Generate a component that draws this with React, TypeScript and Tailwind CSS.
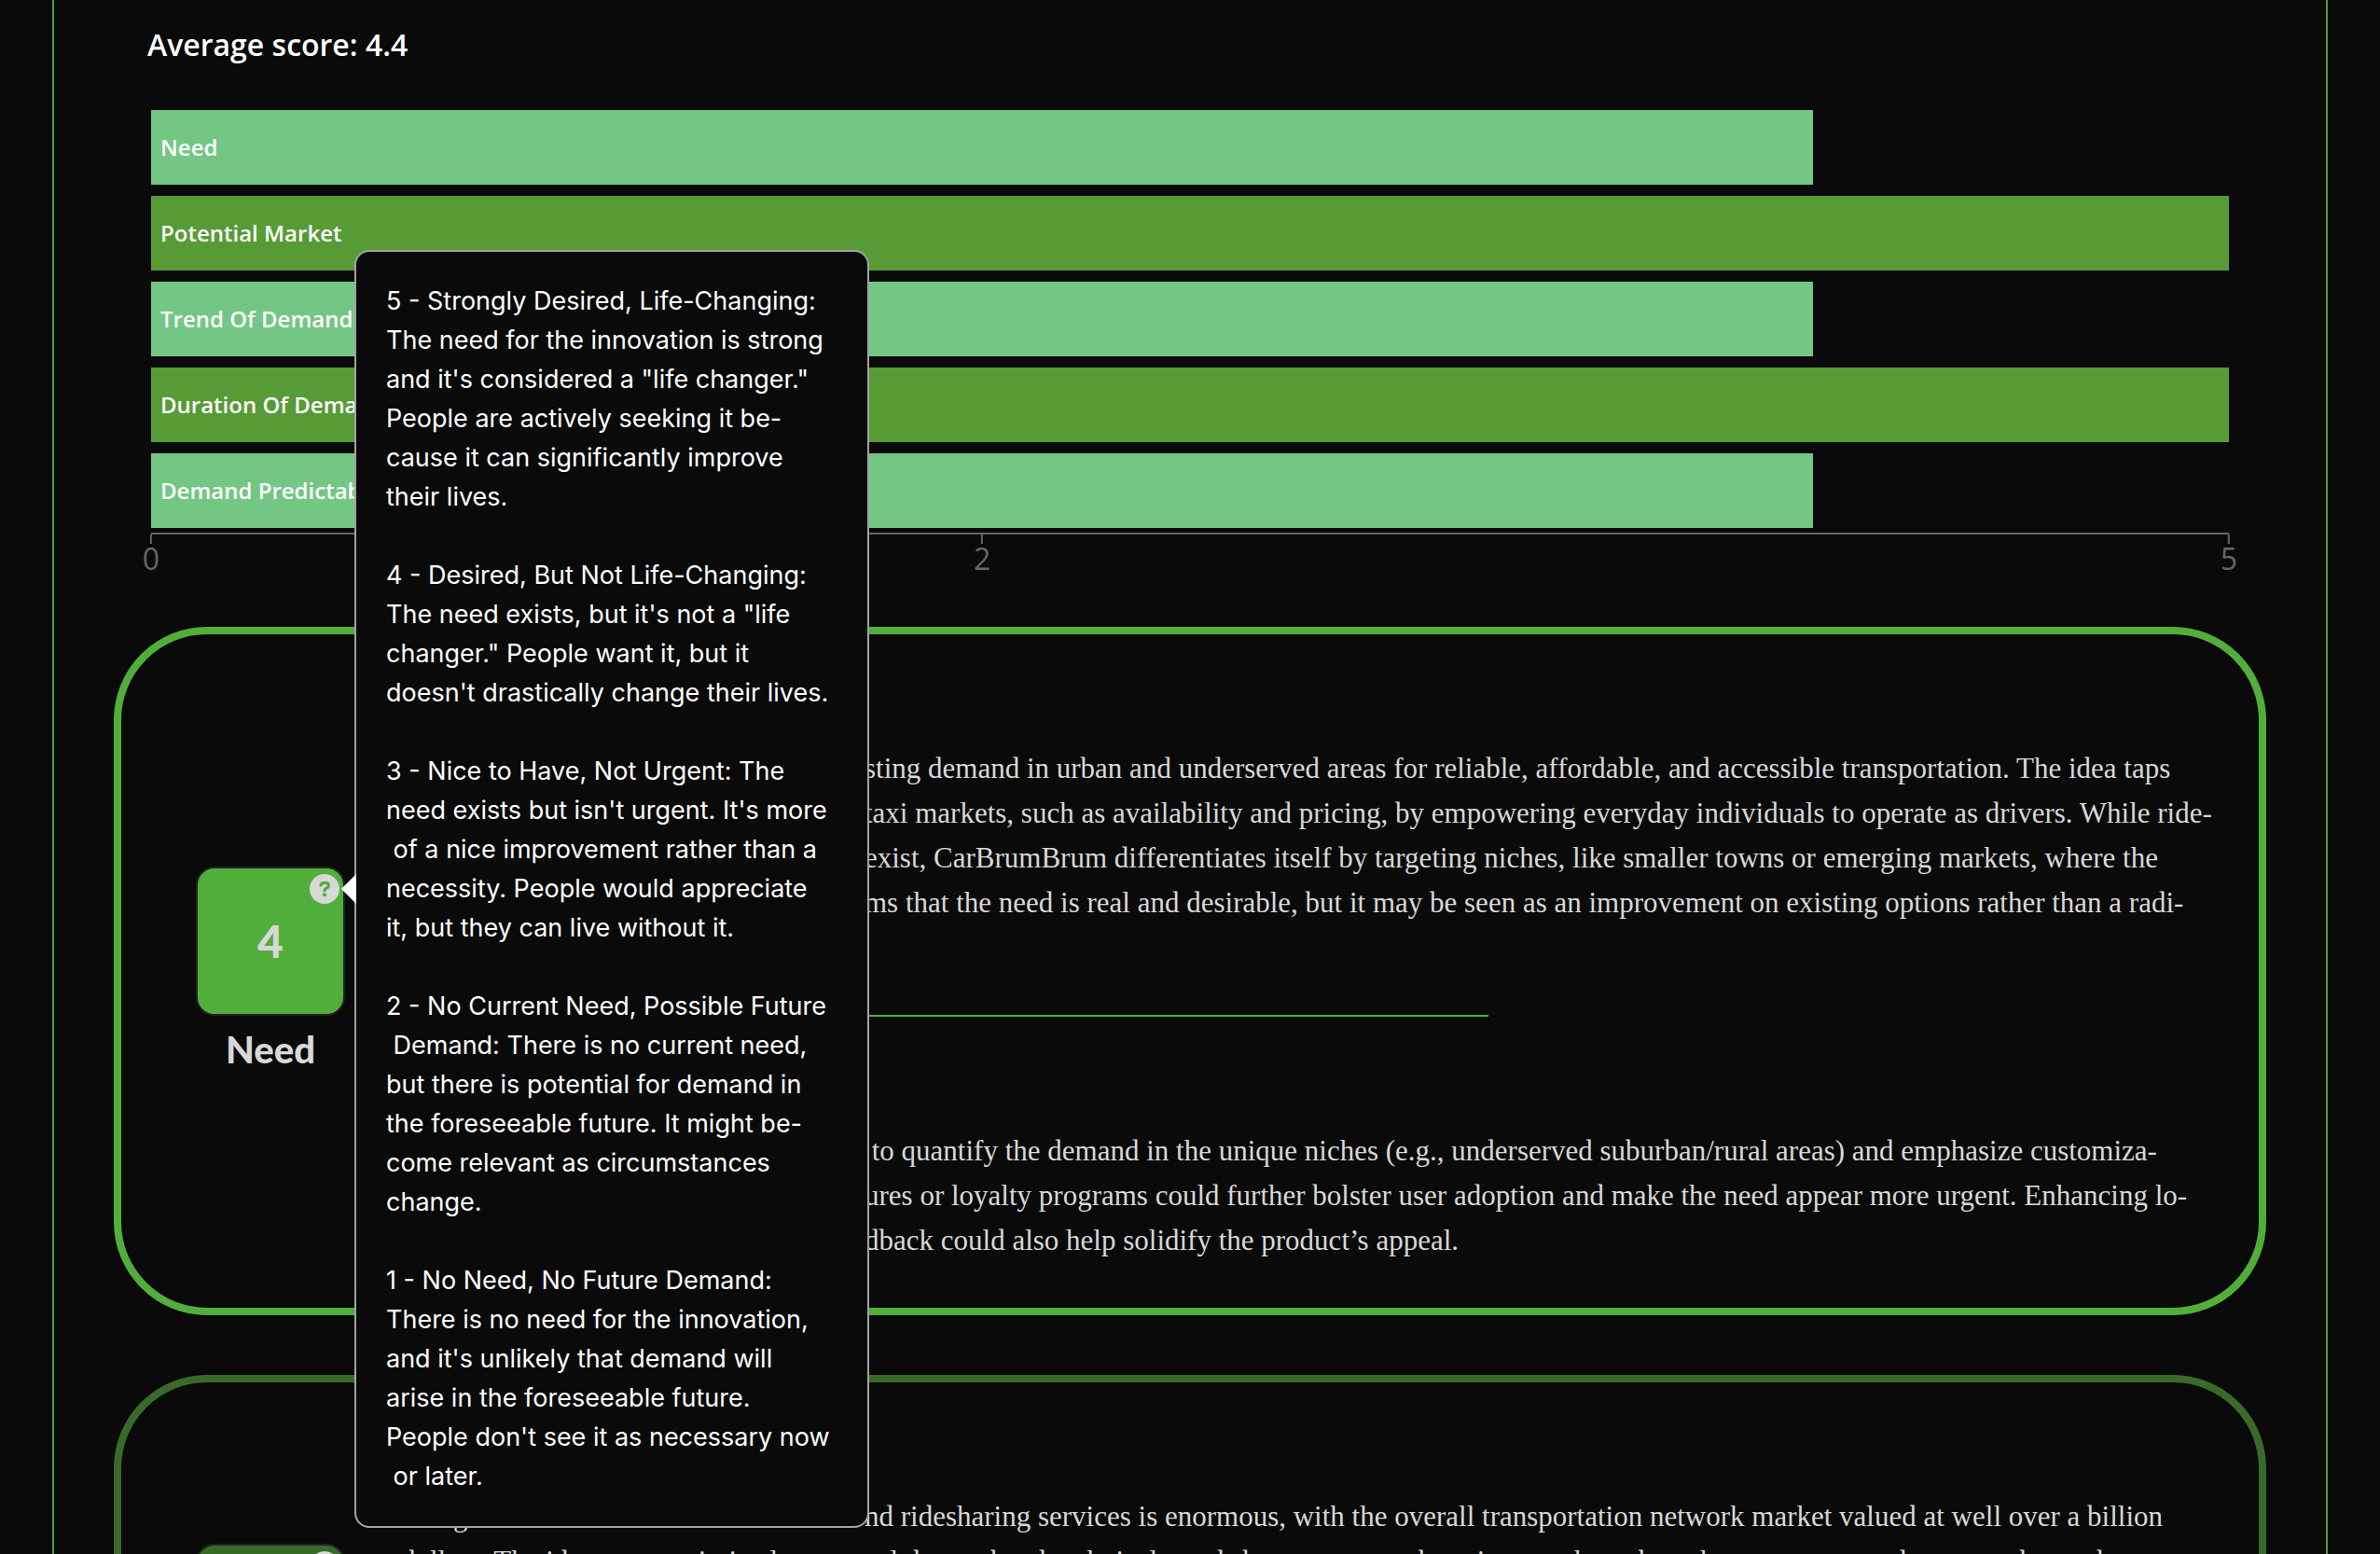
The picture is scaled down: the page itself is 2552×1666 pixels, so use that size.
import React from "react";

const SCORES = [
  { label: "Need", score: 4 },
  { label: "Potential Market", score: 5 },
  { label: "Trend Of Demand", score: 4 },
  { label: "Duration Of Demand", score: 5 },
  { label: "Demand Predictability", score: 4 },
];

const TICKS = [0, 2, 5];
const MAX_SCORE = 5;

const NEED_LEVELS = [
  [
    "5 - Strongly Desired, Life-Changing:",
    "The need for the innovation is strong",
    "and it's considered a \"life changer.\"",
    "People are actively seeking it be-",
    "cause it can significantly improve",
    "their lives.",
  ],
  [
    "4 - Desired, But Not Life-Changing:",
    "The need exists, but it's not a \"life",
    "changer.\" People want it, but it",
    "doesn't drastically change their lives.",
  ],
  [
    "3 - Nice to Have, Not Urgent: The",
    "need exists but isn't urgent. It's more",
    " of a nice improvement rather than a",
    "necessity. People would appreciate",
    "it, but they can live without it.",
  ],
  [
    "2 - No Current Need, Possible Future",
    " Demand: There is no current need,",
    "but there is potential for demand in",
    "the foreseeable future. It might be-",
    "come relevant as circumstances",
    "change.",
  ],
  [
    "1 - No Need, No Future Demand:",
    "There is no need for the innovation,",
    "and it's unlikely that demand will",
    "arise in the foreseeable future.",
    "People don't see it as necessary now",
    " or later.",
  ],
];

type Line = [lead: string, rest: string];

const NEED_REASON: Line[] = [
  ["CarBrumBrum addresses an exi", "sting demand in urban and underserved areas for reliable, affordable, and accessible transportation. The idea taps"],
  ["into gaps in traditional ", "taxi markets, such as availability and pricing, by empowering everyday individuals to operate as drivers. While ride-"],
  ["sharing platforms already ", "exist, CarBrumBrum differentiates itself by targeting niches, like smaller towns or emerging markets, where the"],
  ["need is unmet. This confir", "ms that the need is real and desirable, but it may be seen as an improvement on existing options rather than a radi-"],
  ["cal, life-changing solution.", ""],
];

const NEED_ADVICE: Line[] = [
  ["Conduct market research", " to quantify the demand in the unique niches (e.g., underserved suburban/rural areas) and emphasize customiza-"],
  ["tion. Adding safety feat", "ures or loyalty programs could further bolster user adoption and make the need appear more urgent. Enhancing lo-"],
  ["cal outreach and user fee", "dback could also help solidify the product’s appeal."],
];

const MARKET_REASON: Line[] = [
  ["The global market for taxis a", "nd ridesharing services is enormous, with the overall transportation network market valued at well over a billion"],
  ["dollars. The idea can maximize lo", "cal demand and technical trends by a consumer base in growth, and reach more towns and users as demand"],
  ["rises year over year.", ""],
];

const MARKET_ADVICE: Line[] = [
  ["Prioritize the regions with", " the highest growth and the fewest competing services."],
  ["Then expand in stages.", ""],
  ["Track adoption closely.", ""],
];

function ScoreChart() {
  return (
    <section aria-label="Scores" className="px-10">
      <div className="flex flex-col gap-3">
        {SCORES.map(({ label, score }) => (
          <div
            key={label}
            className={`flex h-20 items-center pl-2.5 ${score === 5 ? "bg-[#579b37]" : "bg-[#74c684]"}`}
            style={{ width: `${(score / MAX_SCORE) * 100}%` }}
          >
            <span className="whitespace-nowrap text-2xl font-semibold text-white">{label}</span>
          </div>
        ))}
      </div>
      <div className="relative mt-[5px] h-[101px] border-t-2 border-[#666666] text-[#666666]">
        {TICKS.map((tick) => (
          <div
            key={tick}
            className="absolute top-0 flex -translate-x-1/2 flex-col items-center"
            style={{ left: `${(tick / MAX_SCORE) * 100}%` }}
          >
            <span className="h-2.5 w-0.5 bg-[#666666]" />
            <span className="text-[32px] leading-8">{tick}</span>
          </div>
        ))}
      </div>
    </section>
  );
}

function NeedTooltip() {
  return (
    <div
      role="tooltip"
      id="need-levels"
      className="absolute top-1/2 left-full z-10 ml-4 flex w-[552px] -translate-y-1/2 flex-col gap-[42px] rounded-2xl border-2 border-[#a3a3a3] bg-[#0a0a0a] px-8 py-8 text-left font-[Inter,sans-serif] text-[27px] leading-[42px] font-normal text-white"
    >
      <svg className="absolute top-1/2 right-full h-8 w-4 -translate-y-1/2" viewBox="0 0 16 32" aria-hidden="true">
        <path d="M16 0 0 16 16 32Z" fill="#ffffff" />
      </svg>
      {NEED_LEVELS.map((lines) => (
        <p key={lines[0]} className="whitespace-pre">
          {lines.join("\n")}
        </p>
      ))}
    </div>
  );
}

function HelpButton({ label, children }: { label: string; children?: React.ReactNode }) {
  return (
    <div className="absolute top-1.5 right-1 size-8">
      <button type="button" aria-label={label} className="block size-8 rounded-full bg-[#d8d8d8]">
        <svg viewBox="0 0 32 32" className="size-8" fill="none" aria-hidden="true">
          <path
            d="M12 12.200C12.500 10.200 14 9.400 16.200 9.400c2.500 0 4.300 1.100 4.300 3 0 2.800-4.500 2.800-4.500 5.400"
            className="stroke-current"
            strokeWidth="3.200"
            strokeLinecap="round"
          />
          <circle cx="16" cy="22.300" r="2.100" className="fill-current" />
        </svg>
      </button>
      {children}
    </div>
  );
}

function Paragraph({ title, lines, align }: { title: string; lines: Line[]; align: string }) {
  return (
    <section>
      <h3 className="mb-6 text-[32px] leading-[48px] font-bold">{title}</h3>
      <p>
        {lines.map(([lead, rest]) => (
          <span key={lead} className="flex whitespace-pre">
            <span className={`flex w-[497px] shrink-0 ${align}`}>{lead}</span>
            <span>{rest}</span>
          </span>
        ))}
      </p>
    </section>
  );
}

type CardProps = {
  score: number;
  label: string;
  border: string;
  tile: string;
  align: string;
  reason: Line[];
  advice: Line[];
  tooltip?: React.ReactNode;
};

function ScoreCard({ score, label, border, tile, align, reason, advice, tooltip }: CardProps) {
  return (
    <article className={`flex items-center rounded-[100px] border-8 py-12 pr-12 pl-20 text-[#d8d8d8] ${border}`}>
      <div className="w-40 shrink-0 text-center font-[Lato,sans-serif] font-black">
        <div className={`relative flex h-40 items-center justify-center rounded-[20px] border-2 border-[#222222] ${tile}`}>
          <span className="text-5xl text-[#d8d8d8]">{score}</span>
          <HelpButton label={`About ${label}`}>{tooltip}</HelpButton>
        </div>
        <h2 className="mt-2 text-[40px] leading-[56px]">{label}</h2>
      </div>
      <div className="ml-[60px] min-w-0 flex-1 font-['Liberation_Serif',serif] text-[31px] leading-[48px]">
        <Paragraph title="Explanation" lines={reason} align={align} />
        <hr className="my-12 w-3/5 border-0 border-t-2 border-[#52ae3b]" />
        <Paragraph title="Suggestions" lines={advice} align={align} />
      </div>
    </article>
  );
}

export default function App() {
  return (
    <div className="h-screen overflow-hidden bg-[#0a0a0a] font-['Open_Sans',sans-serif] text-white">
      <main className="mx-14 border-x-2 border-[#579b37] px-16 pt-6">
        <h1 className="mb-[46px] px-9 text-[32px] leading-[48px] font-semibold">Average score: 4.4</h1>
        <ScoreChart />
        <div className="flex flex-col gap-16">
          <ScoreCard
            score={4}
            label="Need"
            border="border-[#52ae3b]"
            tile="bg-[#52ae3b] text-[#52ae3b]"
            align="justify-end"
            reason={NEED_REASON}
            advice={NEED_ADVICE}
            tooltip={<NeedTooltip />}
          />
          <ScoreCard
            score={5}
            label="Potential Market"
            border="border-[#396a2a]"
            tile="bg-[#396a2a] text-[#396a2a]"
            align="justify-start"
            reason={MARKET_REASON}
            advice={MARKET_ADVICE}
          />
        </div>
      </main>
    </div>
  );
}
